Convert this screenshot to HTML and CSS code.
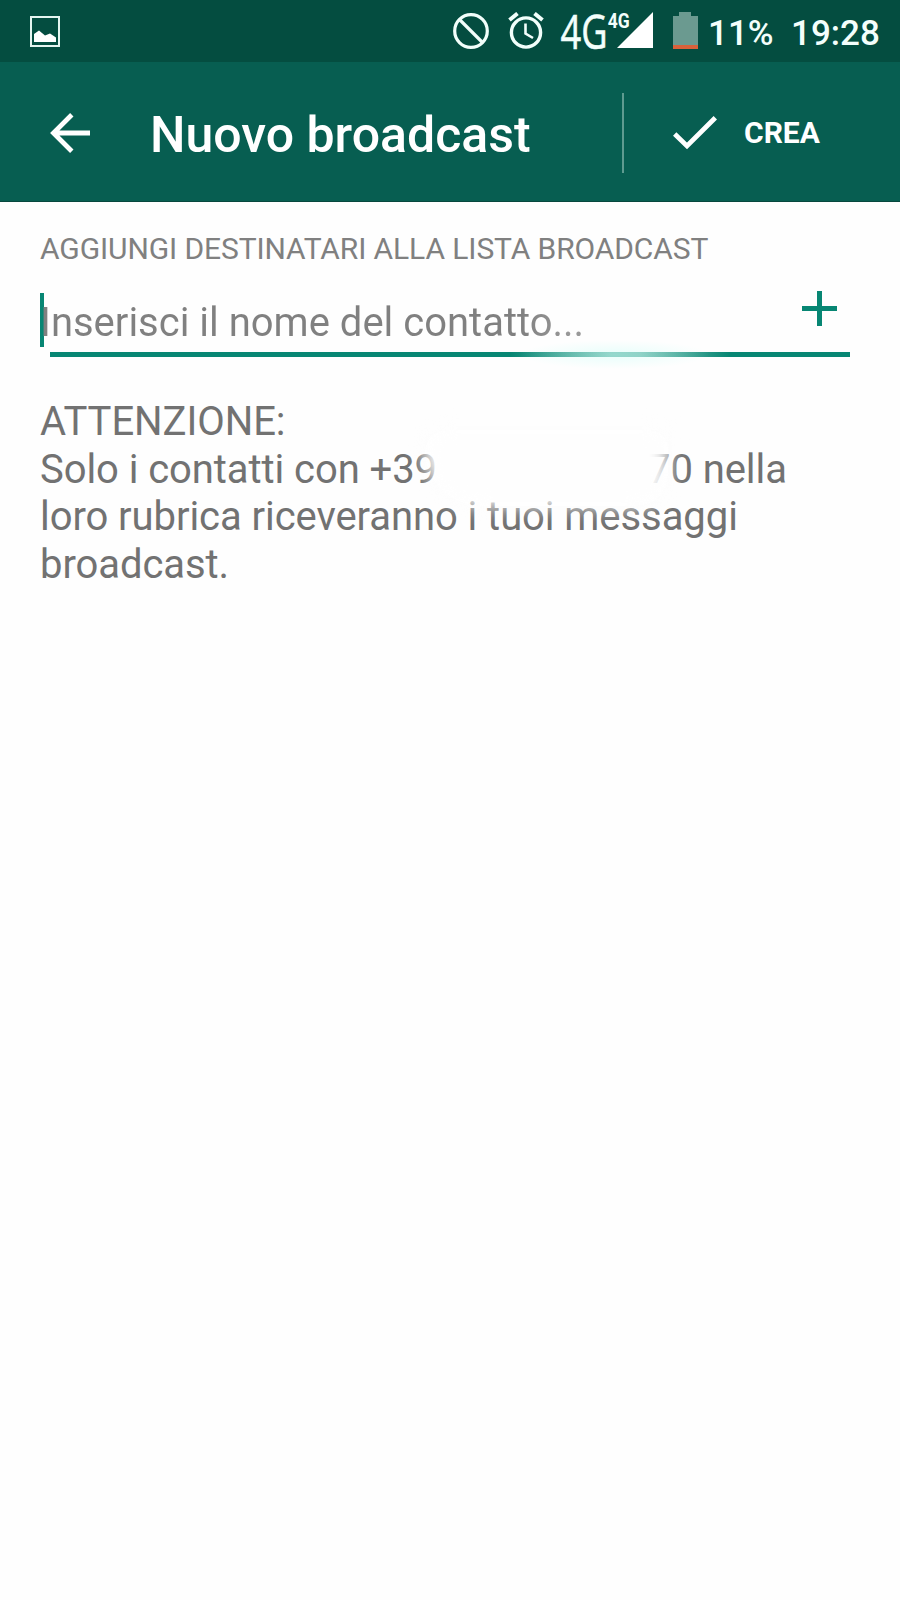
FILE: index.html
```
<!DOCTYPE html>
<html lang="it">

<head>
    <meta charset="UTF-8">
    <meta name="viewport" content="width=device-width, initial-scale=1.0">
    <title>Nuovo broadcast</title>
    <link rel="stylesheet" href="styles.css">
</head>

<body>

    <div class="status-bar">
        <svg class="icon-picture" width="30" height="31" viewBox="0 0 30 31">
            <rect x="1" y="1" width="28" height="29" fill="none" stroke="#e4f5f0" stroke-width="2" />
            <path d="M4 26V18L9 14.500L15 19.500L20 17.500L26 21.500V26Z" fill="#fff" />
        </svg>
        <svg class="icon-blocked" width="36" height="36" viewBox="0 0 36 36" fill="none" stroke="#f2fffb" stroke-width="3.200">
            <circle cx="18" cy="18" r="16.300" />
            <path d="M6.500 6.500L29.500 29.500" />
        </svg>
        <svg class="icon-alarm" width="36" height="37" viewBox="0 0 36 37" fill="none" stroke="#f2fffb" stroke-width="3.400">
            <circle cx="18" cy="20.500" r="14.600" />
            <path d="M1.500 8L9.500 1.500M26.500 1.500L34.500 8" stroke-width="4" />
            <path d="M17.500 11.500V21.500L25 26" stroke-width="2.600" />
        </svg>
        <svg class="icon-network" width="93" height="40" viewBox="0 0 93 40" fill="#f4fffc">
            <text class="network-text" x="0.500" y="36.500" textLength="47" lengthAdjust="spacingAndGlyphs">4G</text>
            <text class="network-small" x="47.800" y="15.500" textLength="22" lengthAdjust="spacingAndGlyphs">4G</text>
            <path d="M93 0V36H57Z" fill="#fff" />
        </svg>
        <svg class="icon-battery" width="25" height="37" viewBox="0 0 25 37">
            <path d="M0 4H6V0H18V4H25V33H0Z" fill="#6b9a90" />
            <rect x="0" y="33" width="25" height="4" fill="#d9613a" />
        </svg>
        <div class="battery-level">11%</div>
        <div class="clock">19:28</div>
    </div>

    <div class="app-bar">
        <svg class="icon-back" width="40" height="40" viewBox="0 0 40 40" fill="none" stroke="#fff" stroke-width="4.800">
            <path d="M40 20H4M21.800 1.800L3.500 20L21.800 38.200" />
        </svg>
        <h1 class="title">Nuovo broadcast</h1>
        <div class="create">
            <svg class="icon-check" width="44" height="34" viewBox="0 0 44 34" fill="none" stroke="#fff" stroke-width="4.800">
                <path d="M1.700 18L14 30L42.300 1.700" />
            </svg>
            <span class="create-text">CREA</span>
        </div>
    </div>

    <div class="content">
        <div class="label">AGGIUNGI DESTINATARI ALLA LISTA BROADCAST</div>
        <div class="input-row">
            <div class="caret"></div>
            <div class="placeholder">Inserisci il nome del contatto...</div>
            <svg class="icon-plus" width="35" height="35" viewBox="0 0 35 35" stroke="#078673" stroke-width="5">
                <path d="M0 17.500H35M17.500 0V35" />
            </svg>
        </div>
        <div class="underline"></div>
        <div class="notice">
            <div>ATTENZIONE:</div>
            <div>Solo i contatti con +39<span class="hidden-number"></span>70 nella</div>
            <div>loro rubrica riceveranno i tuoi messaggi</div>
            <div>broadcast.</div>
            <div class="smudge"></div>
        </div>
    </div>

</body>

</html>
```

FILE: styles.css
```
body {
    margin: 0;
    background: #fefefe;
    font-family: Roboto, sans-serif;
    color: #727272;
}

svg {
    display: block;
    flex: none;
}

.status-bar {
    display: flex;
    height: 62px;
    background: #044d40;
    color: #f4fffc;
    white-space: nowrap;
}

.icon-picture {
    margin: 16px 0 0 30px;
}

.icon-blocked {
    margin: 13px 0 0 393px;
}

.icon-alarm {
    margin: 12px 0 0 19px;
}

.icon-network {
    margin: 12px 0 0 16px;
    overflow: visible;
}

.network-text {
    font-family: "Open Sans", sans-serif;
    font-size: 47px;
    stroke: #f4fffc;
    stroke-width: 0.6px;
}

.network-small {
    font-size: 21px;
    font-weight: 700;
}

.icon-battery {
    margin: 12px 0 0 20px;
}

.battery-level,
.clock {
    font-size: 35px;
    font-weight: 500;
    line-height: 40px;
    margin-top: 14px;
}

.battery-level {
    width: 69px;
    margin-left: 10px;
}

.clock {
    margin-left: 14px;
}

.app-bar {
    display: flex;
    align-items: center;
    height: 140px;
    box-sizing: border-box;
    padding: 2px 0 0 50px;
    background: #075e51;
    border-bottom: 1px solid #07483e;
    color: #fff;
    white-space: nowrap;
}

.title {
    width: 472px;
    margin: 5px 0 0 60px;
    font-size: 50px;
    font-weight: 500;
    line-height: 60px;
}

.create {
    display: flex;
    align-items: center;
    height: 80px;
    padding-left: 49px;
    border-left: 2px solid #5f9b90;
}

.create-text {
    margin-left: 27px;
    font-size: 30px;
    font-weight: 700;
}

.content {
    padding: 27px 50px 0 40px;
    white-space: nowrap;
}

.label {
    height: 42px;
    font-size: 30px;
    line-height: 40px;
    letter-spacing: -0.1px;
    color: #808080;
}

.input-row {
    display: flex;
    height: 81px;
}

.caret {
    width: 4px;
    height: 54px;
    margin-top: 22px;
    background: #078673;
}

.placeholder {
    width: 758px;
    margin: 28px 0 0 -4px;
    font-size: 40px;
    line-height: 48px;
    background: linear-gradient(90deg, #808080 480px, #999 530px);
    background-clip: text;
    color: transparent;
}

.icon-plus {
    margin: 20px 0 0 4px;
}

.underline {
    position: relative;
    height: 5px;
    margin-left: 10px;
    background: linear-gradient(90deg, #078673 460px, #7fc4b8 560px, #7fc4b8 590px, #078673 680px);
}

/* soft glow round the faded part of the line */
.underline::after {
    content: "";
    position: absolute;
    left: 470px;
    top: -12px;
    width: 190px;
    height: 29px;
    background: radial-gradient(closest-side, rgba(190, 255, 245, 0.35), rgba(190, 255, 245, 0));
}

.notice {
    position: relative;
    margin-top: 41px;
    font-size: 40px;
    line-height: 47.6px;
    letter-spacing: -0.07px;
}

.hidden-number {
    display: inline-block;
    width: 211px;
}

.smudge {
    position: absolute;
    left: 384px;
    top: 32px;
    width: 244px;
    height: 76px;
    border-radius: 20px 10px 30px 60px;
    background: #fefefe;
    filter: blur(9px);
}
```
